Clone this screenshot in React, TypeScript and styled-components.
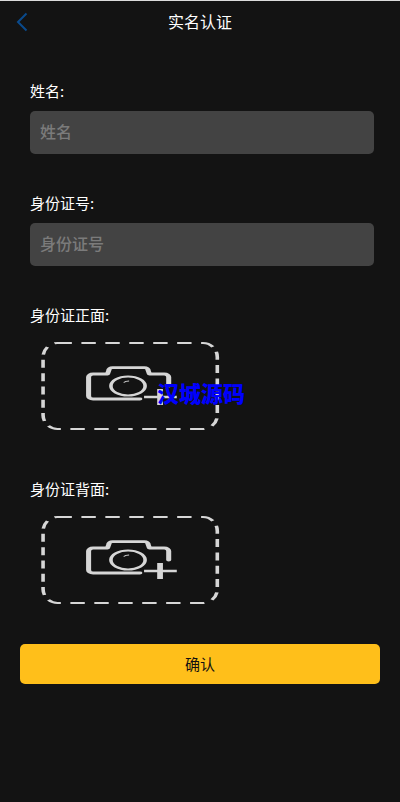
import React from 'react';
import styled, { createGlobalStyle } from 'styled-components';

const GlobalStyle = createGlobalStyle`
  html, body {
    margin: 0;
    padding: 0;
    background-color: #131313;
  }
  * {
    box-sizing: border-box;
  }
`;

const Page = styled.div`
  position: relative;
  width: 400px;
  height: 802px;
  overflow: hidden;
  border-top: 1px solid #dcdcdc;
  background-color: #131313;
  color: #ffffff;
  font-family: "Noto Sans CJK SC", "Liberation Sans", sans-serif;
`;

const Header = styled.div`
  display: flex;
  align-items: center;
  justify-content: center;
  position: relative;
  height: 42px;
  padding-bottom: 2px;
  font-size: 16px;
`;

const BackButton = styled.span`
  position: absolute;
  left: 16px;
  top: 11px;
  display: flex;
`;

const Form = styled.div`
  display: flex;
  flex-direction: column;
  padding: 36px 26px 0 30px;
`;

const Field = styled.div`
  display: flex;
  flex-direction: column;
  height: 112px;
`;

const UploadField = styled.div<{ $height: number }>`
  display: flex;
  flex-direction: column;
  height: ${p => p.$height}px;
`;

const Label = styled.label`
  font-size: 15px;
  line-height: 24px;
  height: 24px;
`;

const TextInput = styled.input`
  width: 344px;
  height: 43px;
  margin-top: 8px;
  padding: 0 10px 3px;
  border: none;
  border-radius: 5px;
  outline: none;
  background-color: #434343;
  color: #ffffff;
  font-family: inherit;
  font-size: 16px;
  font-weight: 500;
  &::placeholder {
    color: #7b7b7b;
    opacity: 1;
  }
`;

const UploadBox = styled.div`
  display: flex;
  width: 180px;
  height: 90px;
  margin: 14px 0 0 10px;
  filter: blur(0.5px);
`;

const SubmitButton = styled.button`
  display: block;
  width: 360px;
  height: 40px;
  margin: 0 0 0 20px;
  padding: 0 0 2px;
  border: none;
  border-radius: 5px;
  background-color: #ffbf1a;
  color: #111111;
  font-family: inherit;
  font-size: 15px;
`;

const Watermark = styled.div`
  position: absolute;
  left: 157px;
  top: 376px;
  color: #0000ff;
  font-size: 22px;
  font-weight: 900;
  line-height: 30px;
  white-space: nowrap;
`;

const BackIcon = () => (
  <svg width="12" height="20" viewBox="0 0 12 20" fill="none" stroke="#0a4a8c" strokeWidth="2">
    <path d="M10.500 1.500L2 10l8.500 8.500" />
  </svg>
);

// the picture in the reference is stretched sideways, so the drawing is too
const CameraUpload = () => (
  <UploadBox>
    <svg width="180" height="90" viewBox="0 0 100 90" preserveAspectRatio="none" fill="none" stroke="#d6d6d6">
      <rect x="1.700" y="2" width="96.800" height="86" rx="8" ry="14" strokeWidth="2" strokeDasharray="8 5.300" />
      <path
        d="M55.500 58H29.500a2.500 3 0 0 1-2.500-3V36a2.500 3 0 0 1 2.500-3H37.500l.8-4a2 2.400 0 0 1 2-2.400H58a2 2.400 0 0 1 2 2.400l.8 4H69a2.500 3 0 0 1 2.500 3v9"
        strokeWidth="2.800"
        strokeLinecap="round"
        strokeLinejoin="round"
      />
      <circle cx="48.900" cy="45" r="9.500" strokeWidth="2" />
      <path d="M46.500 41.500a4 4 0 0 1 3-1.500" strokeWidth="0.800" />
      <path d="M57.800 56H76" strokeWidth="2.600" />
      <path d="M66.700 48V64" strokeWidth="3.200" />
    </svg>
  </UploadBox>
);

export default function App() {
  return (
    <Page>
      <GlobalStyle />
      <Header>
        <BackButton>
          <BackIcon />
        </BackButton>
        实名认证
      </Header>
      <Form>
        <Field>
          <Label>姓名:</Label>
          <TextInput placeholder="姓名" />
        </Field>
        <Field>
          <Label>身份证号:</Label>
          <TextInput placeholder="身份证号" />
        </Field>
        <UploadField $height={174}>
          <Label>身份证正面:</Label>
          <CameraUpload />
        </UploadField>
        <UploadField $height={167}>
          <Label>身份证背面:</Label>
          <CameraUpload />
        </UploadField>
      </Form>
      <SubmitButton>确认</SubmitButton>
      <Watermark>汉城源码</Watermark>
    </Page>
  );
}
